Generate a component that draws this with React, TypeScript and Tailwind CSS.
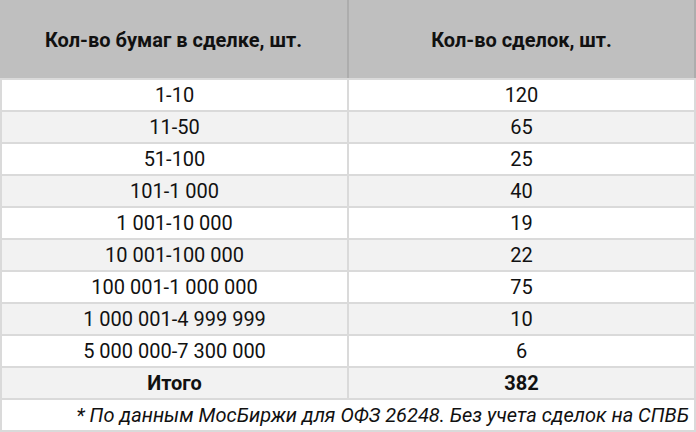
import React from "react";

const rows: [string, string][] = [
  ["1-10", "120"],
  ["11-50", "65"],
  ["51-100", "25"],
  ["101-1 000", "40"],
  ["1 001-10 000", "19"],
  ["10 001-100 000", "22"],
  ["100 001-1 000 000", "75"],
  ["1 000 001-4 999 999", "10"],
  ["5 000 000-7 300 000", "6"],
];

export default function App() {
  return (
    <div
      className="w-[696px] h-[432px] flex flex-col bg-white text-[#111] text-[20px] leading-none"
      style={{ fontFamily: "Roboto, 'Noto Sans', sans-serif" }}
    >
      <div className="flex h-[80px] bg-[#bfbfbf] border-b-2 border-[#dadada] font-bold">
        <div className="w-[349px] flex items-center justify-center border-r-2 border-[#adadad] pt-[2px]">
          Кол-во бумаг в сделке, шт.
        </div>
        <div className="flex-1 flex items-center justify-center border-r-2 border-[#adadad] pt-[2px]">
          Кол-во сделок, шт.
        </div>
      </div>
      {rows.map(([a, b], i) => (
        <div
          key={a}
          className={`flex h-[32px] border-b-2 border-l-2 border-r-2 border-[#dadada] ${
            i % 2 === 1 ? "bg-[#f2f2f2]" : "bg-white"
          }`}
        >
          <div className="w-[347px] flex items-center justify-center border-r-2 border-[#dadada]">
            {a}
          </div>
          <div className="flex-1 flex items-center justify-center">{b}</div>
        </div>
      ))}
      <div className="flex h-[32px] border-b-2 border-l-2 border-r-2 border-[#dadada] bg-[#f2f2f2] font-bold">
        <div className="w-[347px] flex items-center justify-center border-r-2 border-[#dadada]">
          Итого
        </div>
        <div className="flex-1 flex items-center justify-center">382</div>
      </div>
      <div className="flex h-[32px] border-b-2 border-l-2 border-r-2 border-[#dadada] bg-white italic items-center justify-end pr-[5px] whitespace-nowrap">
        * По данным МосБиржи для ОФЗ 26248. Без учета сделок на СПВБ
      </div>
    </div>
  );
}
